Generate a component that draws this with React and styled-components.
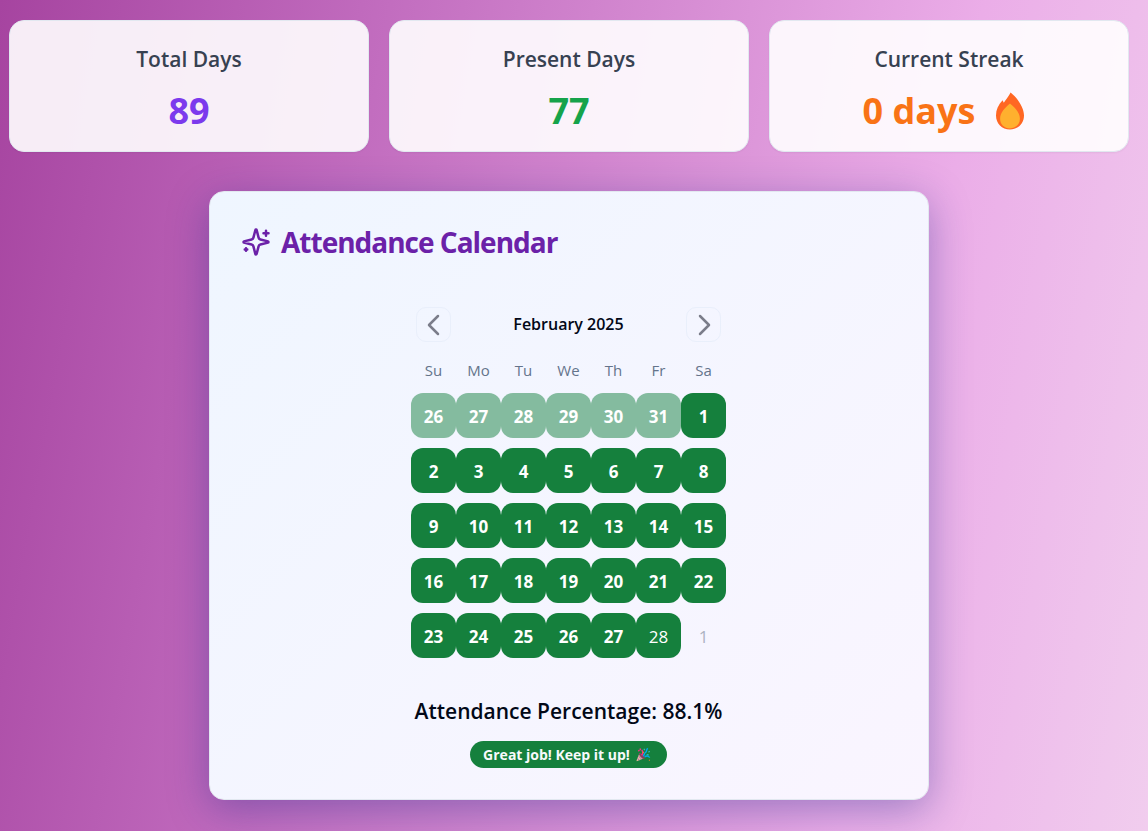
import React from "react";
import styled, { createGlobalStyle, css } from "styled-components";

const GlobalStyle = createGlobalStyle`
  *, *::before, *::after { box-sizing: border-box; }
  body {
    margin: 0;
    font-family: "Open Sans", "Noto Sans", sans-serif;
    color: #020817;
  }
  h1, h2, p { margin: 0; }
  button { font: inherit; cursor: pointer; }
`;

const Page = styled.main`
  min-height: 100vh;
  padding: 20px 19px 32px 9px;
  display: flex;
  flex-direction: column;
  align-items: center;
  gap: 39px;
  background: linear-gradient(100deg, #a644a0 0%, #c06abd 28%, #ebade8 76%, #f1cdee 100%);
`;

const Stats = styled.section`
  width: 100%;
  display: grid;
  grid-template-columns: repeat(3, 1fr);
  gap: 20px;
`;

const StatCard = styled.article`
  padding: 24px 24px 16px;
  display: flex;
  flex-direction: column;
  align-items: center;
  gap: 14px;
  border: 1px solid #e2e8f0;
  border-radius: 15px;
  background: rgba(255, 255, 255, 0.9);
  box-shadow: 0 1px 2px rgba(0, 0, 0, 0.05);
`;

const StatLabel = styled.h2`
  font-size: 21px;
  line-height: 28px;
  font-weight: 600;
  color: #374151;
`;

const StatValue = styled.p`
  display: flex;
  align-items: center;
  gap: 14px;
  font-size: 36px;
  line-height: 48px;
  font-weight: 700;
  color: ${({ $color }) => $color};
`;

const CalendarCard = styled.section`
  width: 100%;
  max-width: 720px;
  padding: 31px 32px 31px 31px;
  display: flex;
  flex-direction: column;
  border: 1px solid #e2e8f0;
  border-radius: 15px;
  background: linear-gradient(135deg, #eff6ff, #faf5ff);
  box-shadow: 0 10px 40px rgba(31, 38, 135, 0.37);
`;

const CardTitle = styled.h1`
  display: flex;
  align-items: center;
  gap: 10px;
  font-size: 28px;
  line-height: 38px;
  font-weight: 700;
  letter-spacing: -1px;
  color: #6b21a8;
`;

const Calendar = styled.div`
  align-self: center;
  width: 315px;
  margin-top: 46px;
`;

const MonthBar = styled.div`
  padding: 0 5px;
  display: flex;
  align-items: center;
  justify-content: space-between;
`;

const MonthName = styled.h2`
  font-size: 16px;
  line-height: 25px;
  font-weight: 600;
`;

const NavButton = styled.button`
  width: 35px;
  height: 35px;
  padding: 0;
  display: grid;
  place-items: center;
  border: 1px solid #e9effb;
  border-radius: 10px;
  background: transparent;
  color: #7b7d8a;
`;

const Days = styled.table`
  width: 100%;
  margin-top: 15px;
  border-collapse: collapse;
  table-layout: fixed;
`;

const Weekday = styled.th`
  padding: 0;
  font-size: 15px;
  line-height: 26px;
  font-weight: 400;
  color: #64748b;
`;

const DayCell = styled.td`
  padding: 10px 0 0;
`;

const Day = styled.button`
  display: block;
  width: 100%;
  height: 45px;
  padding: 2px 0 0;
  border: 0;
  border-radius: 12px;
  font-size: 17px;
  line-height: 25px;
  font-weight: 700;
  color: #fff;
  background: #15803d;
  ${({ $kind }) => $kind === "outside" && css`
    background: #84bb9f;
  `}
  ${({ $kind }) => $kind === "today" && css`
    font-weight: 400;
  `}
  ${({ $kind }) => $kind === "empty" && css`
    font-weight: 400;
    color: #adb3c2;
    background: transparent;
  `}
`;

const Summary = styled.div`
  margin-top: 36px;
  display: flex;
  flex-direction: column;
  align-items: center;
  gap: 12px;
`;

const Percentage = styled.p`
  font-size: 21px;
  line-height: 35px;
  font-weight: 600;
`;

const Badge = styled.p`
  height: 27px;
  padding: 0 16px 0 13px;
  display: flex;
  align-items: center;
  gap: 6px;
  border-radius: 999px;
  background: #15803d;
  color: #f8fafc;
  font-size: 14px;
  line-height: 20px;
  font-weight: 700;
`;

const Sparkles = () => (
  <svg width="30" height="30" viewBox="0 0 24 24" fill="none" stroke="currentColor" strokeWidth="2" strokeLinecap="round" strokeLinejoin="round" aria-hidden="true">
    <path d="M9.937 15.500A2 2 0 0 0 8.500 14.063l-6.135-1.582a.5.5 0 0 1 0-.962L8.500 9.936A2 2 0 0 0 9.937 8.500l1.582-6.135a.5.5 0 0 1 .963 0L14.063 8.500A2 2 0 0 0 15.500 9.937l6.135 1.581a.5.5 0 0 1 0 .964L15.500 14.063a2 2 0 0 0-1.437 1.437l-1.582 6.135a.5.5 0 0 1-.963 0z" />
    <path d="M20 3v4M22 5h-4M4 17v2M5 18H3" />
  </svg>
);

const Flame = () => (
  <svg width="46" height="38" viewBox="-6 0 46 38" role="img" aria-label="fire">
    <path d="M15.600.4C13.800 4.400 10.600 7.600 8.800 10.800L7.600 8.200C3.200 12.700 1 17.800 1 23.400 1 31.400 6.900 37.400 15 37.400s14-6 14-14C29 15.400 22.400 5.800 15.600.4Z" fill="#ff6723" />
    <path d="M15 11.400C10.200 15.600 5.100 20.400 5.100 26.700c0 5.600 4.200 9.700 9.900 9.700s9.900-4.100 9.900-9.700c0-6.300-5.100-11.100-9.900-15.300Z" fill="#ffb02e" />
  </svg>
);

const PartyPopper = () => (
  <svg width="15" height="15" viewBox="0 0 15 15" role="img" aria-label="party popper">
    <path d="M3.400 6.300.6 13.400c-.2.6.2.9.7.7l7-3.200Z" fill="#f0b89a" />
    <path d="m2.400 9 3.300 3.200M1.400 11.400l2.200 1.800M3.300 6.900l4.200 4.300" stroke="#8b5fb5" strokeWidth=".9" />
    <ellipse cx="5.900" cy="8.900" rx="1.600" ry="3.700" transform="rotate(-43 5.900 8.900)" fill="#83405f" />
    <path d="M5.600 8.200c1.800-1.800 1.500-3.500.2-5.200M2.300 4.200l1.200-1.100M4 1.500l.7 1.600" stroke="#f92f87" strokeWidth="1.400" fill="none" />
    <path d="M7 8.900c2.100-1 .8-2.600 2.400-3.300 1.600-.6.500-2.400 2.300-4.300M8.600 10.100c1.700-1.500 3.400-1.500 5.100.5" stroke="#00a6ed" strokeWidth="1.400" fill="none" />
    <path d="m7.900 1.800.8 1.300M12.400 5.200l1.400-1M10.700 7.700l2 .1" stroke="#2dbcc2" strokeWidth="1.200" />
    <path d="m6.900 4.900.7 1M13 13l.7.4" stroke="#ff822d" strokeWidth="1.100" />
  </svg>
);

const Chevron = ({ d }) => (
  <svg width="14" height="22" viewBox="0 0 14 22" fill="none" stroke="currentColor" strokeWidth="2.500" strokeLinecap="round" strokeLinejoin="round" aria-hidden="true">
    <path d={d} />
  </svg>
);

const WEEKDAYS = ["Su", "Mo", "Tu", "We", "Th", "Fr", "Sa"];

const WEEKS = Array.from({ length: 5 }, (_, week) =>
  Array.from({ length: 7 }, (_, weekday) => {
    const n = week * 7 + weekday - 5;
    if (n < 1) return { label: n + 31, kind: "outside" };
    if (n > 28) return { label: n - 28, kind: "empty" };
    return { label: n, kind: n === 28 ? "today" : "present" };
  })
);

export default function App() {
  return (
    <>
      <GlobalStyle />
      <Page>
        <Stats>
          <StatCard>
            <StatLabel>Total Days</StatLabel>
            <StatValue $color="#7c3aed">89</StatValue>
          </StatCard>
          <StatCard>
            <StatLabel>Present Days</StatLabel>
            <StatValue $color="#16a34a">77</StatValue>
          </StatCard>
          <StatCard>
            <StatLabel>Current Streak</StatLabel>
            <StatValue $color="#f97316">0 days <Flame /></StatValue>
          </StatCard>
        </Stats>

        <CalendarCard>
          <CardTitle><Sparkles />Attendance Calendar</CardTitle>
          <Calendar>
            <MonthBar>
              <NavButton aria-label="Previous month"><Chevron d="M11 2 2 11l9 9" /></NavButton>
              <MonthName>February 2025</MonthName>
              <NavButton aria-label="Next month"><Chevron d="m3 2 9 9-9 9" /></NavButton>
            </MonthBar>
            <Days>
              <thead>
                <tr>{WEEKDAYS.map((d) => <Weekday key={d} scope="col">{d}</Weekday>)}</tr>
              </thead>
              <tbody>
                {WEEKS.map((week, i) => (
                  <tr key={i}>
                    {week.map(({ label, kind }) => (
                      <DayCell key={label}><Day $kind={kind}>{label}</Day></DayCell>
                    ))}
                  </tr>
                ))}
              </tbody>
            </Days>
          </Calendar>
          <Summary>
            <Percentage>Attendance Percentage: 88.1%</Percentage>
            <Badge>Great job! Keep it up! <PartyPopper /></Badge>
          </Summary>
        </CalendarCard>
      </Page>
    </>
  );
}
